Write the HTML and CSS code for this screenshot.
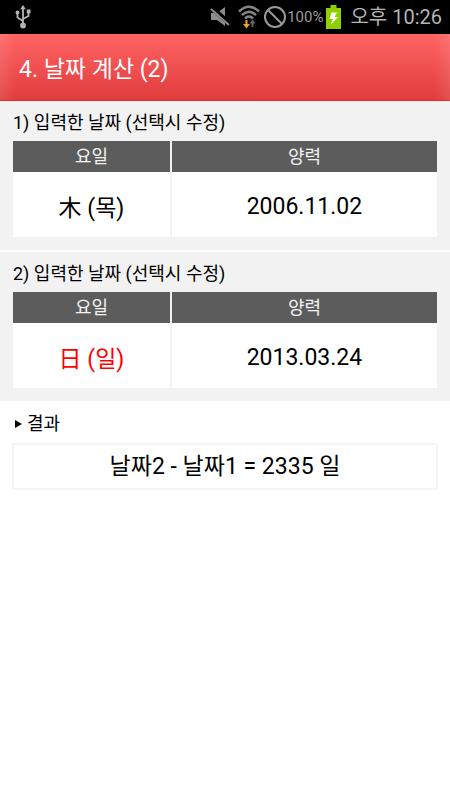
FILE: index.html
```html
<!DOCTYPE html>
<html lang="ko">
<head>
    <meta charset="UTF-8">
    <meta name="viewport" content="width=device-width, initial-scale=1.0">
    <title>날짜 계산</title>
    <link rel="stylesheet" href="styles.css">
</head>
<body>
    <div class="status-bar">
        <svg class="usb" width="16" height="24" viewBox="0 0 16 24" fill="#b4b4b4" stroke="#b4b4b4">
            <path d="M8 3v16M8 16L2.500 12.500V8M8 14L13.500 11V7" fill="none" stroke-width="1.800"/>
            <path d="M8 0L10.800 4.200H5.200z" stroke="none"/>
            <circle cx="2.500" cy="7.500" r="1.900" stroke="none"/>
            <path d="M11.700 4.500h3.800v3.800h-3.800z" stroke="none"/>
            <circle cx="8" cy="20.500" r="2.900" stroke="none"/>
        </svg>
        <div class="status-icons">
            <svg width="20" height="20" viewBox="0 0 20 20">
                <path d="M1 6h6l8-6v19l-8-6H1z" fill="#8c8c8c"/>
                <path d="M2 1l18 16" stroke="#000" stroke-width="5"/>
                <path d="M1 2l18 16" stroke="#8c8c8c" stroke-width="2"/>
            </svg>
            <svg class="wifi" width="22" height="24" viewBox="0 0 22 24" fill="none">
                <path d="M1 6.500Q11-3 21 6.500M4 10Q11 3.500 18 10M7 13.500Q11 9.500 15 13.500" stroke="#858585" stroke-width="2.500"/>
                <path d="M8.500 15v6" stroke="#f8a01e" stroke-width="2"/>
                <path d="M5 19h7l-3.500 4.500z" fill="#f8a01e"/>
                <path d="M14.500 22v-5" stroke="#666" stroke-width="2"/>
                <path d="M11.500 18.500h6l-3-4z" fill="#666"/>
            </svg>
            <svg class="blocked" width="24" height="24" viewBox="0 0 24 24" fill="none" stroke="#999" stroke-width="2">
                <circle cx="12" cy="12" r="10"/>
                <path d="M5 5l14 14"/>
            </svg>
        </div>
        <span class="percent">100%</span>
        <svg class="battery" width="15" height="24" viewBox="0 0 15 24">
            <path d="M0 3h4.500V0h6v3H15v21H0z" fill="#8fd000"/>
            <path d="M5.500 7.500h5.500l-2.500 4.500h3.500L4.500 20l2.500-6H3.500z" fill="#fff"/>
        </svg>
        <span class="clock">오후 10:26</span>
    </div>

    <header class="title-bar">
        <h1>4. 날짜 계산 (2)</h1>
    </header>

    <main>
        <section class="date-section">
            <h2>1) 입력한 날짜 (선택시 수정)</h2>
            <table class="date-table">
                <thead>
                    <tr>
                        <th class="day">요일</th>
                        <th>양력</th>
                    </tr>
                </thead>
                <tbody>
                    <tr>
                        <td><button type="button">木 (목)</button></td>
                        <td><button type="button">2006.11.02</button></td>
                    </tr>
                </tbody>
            </table>
        </section>

        <section class="date-section">
            <h2>2) 입력한 날짜 (선택시 수정)</h2>
            <table class="date-table">
                <thead>
                    <tr>
                        <th class="day">요일</th>
                        <th>양력</th>
                    </tr>
                </thead>
                <tbody>
                    <tr>
                        <td><button type="button" class="sunday">日 (일)</button></td>
                        <td><button type="button">2013.03.24</button></td>
                    </tr>
                </tbody>
            </table>
        </section>

        <section class="result-section">
            <h2 class="result-title">
                <svg width="8" height="8" viewBox="0 0 8 8"><path d="M1 0l7 4-7 4z"/></svg>
                결과
            </h2>
            <p class="result-box">날짜2 - 날짜1 = 2335 일</p>
        </section>
    </main>
</body>
</html>
```

FILE: styles.css
```css
* {
    box-sizing: border-box;
    margin: 0;
    padding: 0;
}

body {
    font-family: Roboto, "Noto Sans CJK KR", sans-serif;
    background-color: #fff;
    color: #000;
}

.status-bar {
    display: flex;
    align-items: center;
    height: 34px;
    padding: 0 8px 0 15px;
    background: #000;
    color: #b4b4b4;
}

.status-icons {
    display: flex;
    align-items: center;
    margin-left: auto;
}

.wifi {
    margin: 0 3px 0 8px;
}

.percent {
    margin-right: 3px;
    font-size: 15px;
    color: #999;
}

.clock {
    margin-left: 9px;
    font-size: 20px;
    line-height: 34px;
}

.title-bar {
    height: 67px;
    padding: 3px 19px 0;
    border-bottom: 1px solid #ee2c2c;
    background:
        linear-gradient(to right, rgba(255,255,255,0.1), rgba(255,255,255,0) 16px),
        linear-gradient(to left, rgba(255,255,255,0.1), rgba(255,255,255,0) 16px),
        linear-gradient(#ff6464, #e03c3c);
}

.title-bar h1 {
    font-size: 23px;
    font-weight: 400;
    line-height: 66px;
    color: #fff;
}

.date-section {
    padding: 8px 13px 13px;
    border-bottom: 2px solid #fff;
    background: #f2f2f2;
}

h2 {
    font-size: 18px;
    font-weight: 400;
    line-height: 28px;
}

.date-table {
    width: 100%;
    margin-top: 4px;
    border-spacing: 0;
    table-layout: fixed;
}

.date-table th {
    height: 31px;
    background: #5c5c5c;
    color: #f2f2f2;
    font-size: 18px;
    font-weight: 400;
    line-height: 31px;
}

.date-table .day {
    width: 37%;
}

.date-table th + th,
.date-table td + td {
    border-left: 2px solid #f2f2f2;
}

.date-table td {
    background: #fff;
}

.date-table button {
    display: block;
    width: 100%;
    height: 65px;
    padding-top: 3px;
    border: none;
    background: none;
    color: #000;
    font-family: inherit;
    font-size: 23px;
    cursor: pointer;
}

.date-table .sunday {
    color: #f00;
}

.result-section {
    padding: 7px 12px;
}

.result-title {
    display: flex;
    align-items: center;
    gap: 5px;
    padding-left: 2px;
}

.result-box {
    margin-top: 5px;
    border: 2px solid #f5f5f5;
    font-size: 23px;
    line-height: 43px;
    text-align: center;
}
```
